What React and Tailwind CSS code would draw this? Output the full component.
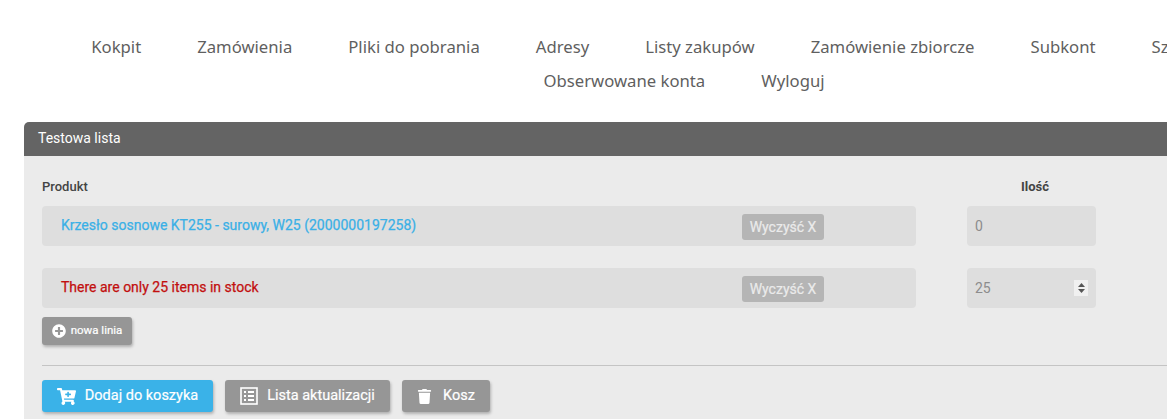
import React from "react";
import { FaCartPlus, FaTrash, FaPlusCircle } from "react-icons/fa";

const navRow = ["Kokpit", "Zamówienia", "Pliki do pobrania", "Adresy", "Listy zakupów", "Zamówienie zbiorcze", "Subkont", "Szablony zakupu", "Obserwowane konta", "Wyloguj"];

function ClearBtn() {
  return (
    <span className="mt-2 flex h-[26px] w-[82px] items-center justify-center self-start rounded-[3px] bg-[#b5b5b5] text-[14px] text-[#ebebeb] [-webkit-text-stroke:0.2px]">
      Wyczyść X
    </span>
  );
}

function ListIcon() {
  return (
    <svg width="18" height="18" viewBox="0 0 18 18" fill="none">
      <rect x="1" y="1" width="16" height="16" stroke="#fff" strokeWidth="1.6" />
      <path d="M4 5h2M4 9h2M4 13h2M8 5h6M8 9h6M8 13h6" stroke="#fff" strokeWidth="1.8" />
    </svg>
  );
}

function Row({ text, color, qty, spinner, mt }) {
  return (
    <div className={`flex ${mt}`}>
      <div className="flex h-10 w-[874px] items-center rounded-[4px] bg-[#dedede] pl-[19px]">
        <span className={`w-[681px] -translate-y-px text-[14px] [-webkit-text-stroke:0.25px] ${color}`}>{text}</span>
        <ClearBtn />
      </div>
      <div className="ml-[51px] flex h-10 w-[129px] items-center justify-between rounded-[4px] bg-[#dedede] pl-2 pr-2">
        <span className="text-[14px] text-[#8c8c8c]">{qty}</span>
        {spinner && (
          <span className="flex h-4 w-[14px] flex-col items-center justify-center gap-[2px] bg-[#f0f0f0]">
            <svg width="7" height="4" viewBox="0 0 7 4"><path d="M3.5 0L7 4H0z" fill="#555" /></svg>
            <svg width="7" height="4" viewBox="0 0 7 4"><path d="M3.5 4L0 0h7z" fill="#555" /></svg>
          </span>
        )}
      </div>
    </div>
  );
}

function Btn({ children, bg, w, gap }) {
  return (
    <button className={`flex h-8 ${w} items-center justify-center ${gap} rounded-[3px] ${bg} text-[14.5px] text-white shadow-[1px_2px_3px_rgba(0,0,0,0.25)] [-webkit-text-stroke:0.2px]`}>
      {children}
    </button>
  );
}

export default function App() {
  return (
    <div className="h-[419px] w-[1167px] overflow-hidden bg-white font-['Roboto',sans-serif]">
      <div className="ml-6 w-[1320px] pt-[30px]">
        <nav className="flex flex-wrap justify-center font-['Noto_Sans',sans-serif] text-[16.7px] leading-[34px] text-[#5f5f5f]">
          {navRow.map((n) => (
            <span key={n} className={n === "Szablony zakupu" ? "-mr-[6px] whitespace-nowrap px-7" : "whitespace-nowrap px-7"}>{n}</span>
          ))}
        </nav>
        <section className="mt-6 rounded-t-[5px]">
          <div className="flex h-[34px] items-center rounded-t-[5px] bg-[#646464] pb-[2px] pl-[14px] text-[14px] text-white">Testowa lista</div>
          <div className="h-[300px] bg-[#ebebeb] px-[18px] pt-6">
            <div className="flex h-[14px] items-center text-[13px] font-medium text-[#444]">
              <span className="w-[979px]">Produkt</span>
              <span className="font-bold">Ilość</span>
            </div>
            <Row mt="mt-[12px]" text="Krzesło sosnowe KT255 - surowy, W25 (2000000197258)" color="text-[#3ab0e6]" qty="0" />
            <Row mt="mt-[22px]" text="There are only 25 items in stock" color="text-[#c20f0f]" qty="25" spinner />
            <button className="mt-[9px] flex h-7 w-[90px] items-center justify-center gap-[5px] rounded-[3px] bg-[#969696] text-[11.5px] text-white shadow-[1px_2px_3px_rgba(0,0,0,0.25)] [-webkit-text-stroke:0.2px]">
              <FaPlusCircle className="text-[14px]" />
              nowa linia
            </button>
            <div className="mt-5 h-px w-full bg-[#c4c4c4]" />
            <div className="mt-[14px] flex gap-3">
              <Btn bg="bg-[#3ab2e8]" w="w-[171px]" gap="gap-[9px]"><FaCartPlus className="text-[19px]" />Dodaj do koszyka</Btn>
              <Btn bg="bg-[#969696]" w="w-[165px]" gap="gap-[9px]"><ListIcon />Lista aktualizacji</Btn>
              <Btn bg="bg-[#969696]" w="w-[88px]" gap="gap-[11px]"><FaTrash className="text-[15px]" />Kosz</Btn>
            </div>
          </div>
        </section>
      </div>
    </div>
  );
}
